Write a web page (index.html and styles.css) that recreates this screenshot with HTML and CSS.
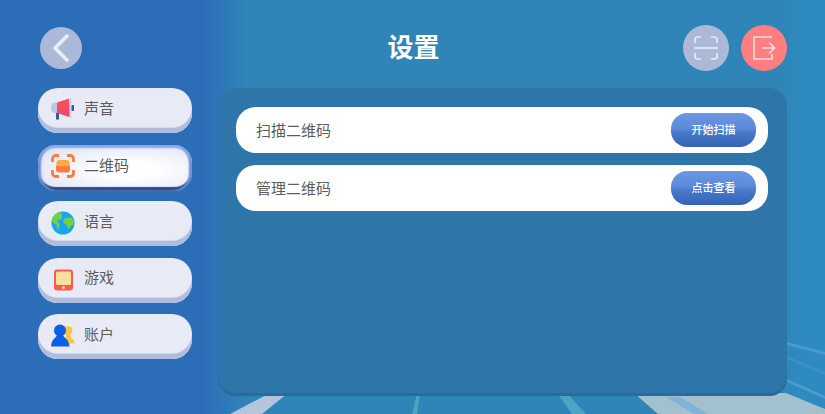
FILE: index.html
```html
<!DOCTYPE html>
<html lang="zh-CN">
<head>
  <meta charset="UTF-8" />
  <title>设置</title>
  <link rel="stylesheet" href="styles.css">
</head>
<body>
  <div class="screen">
    <!-- floor stripes behind everything -->
    <svg class="backdrop" width="825" height="414" viewBox="0 0 825 414">
      <polygon points="230,414 262,414 288,393 270,393" fill="#b4c6de"/>
      <polygon points="412,414 417,414 420,393 417,393" fill="#4ea3c4"/>
      <polygon points="572,414 586,414 567,393 557,393" fill="#4ea3c4"/>
      <polygon points="634,393 786,393 825,409 825,414 658,414" fill="#a3c0cf"/>
      <polygon points="666,397 680,397 708,414 694,414" fill="#7fb3d8"/>
      <polygon points="787,342 825,352 825,355 787,345" fill="#4a9ad2"/>
      <polygon points="787,356 825,372 825,375 787,359" fill="#3a90c8"/>
      <polygon points="787,379 825,396 825,399 787,382" fill="#4c9cd2"/>
    </svg>

    <header class="topbar">
      <div class="topbar-left">
        <button class="round-btn back-btn">
          <svg width="22" height="28" viewBox="0 0 22 28"><path d="M17 2 L5 14 L17 26" fill="none" stroke="#e8ecf6" stroke-width="3.6" stroke-linecap="round" stroke-linejoin="round"/></svg>
        </button>
      </div>
      <h1>设置</h1>
      <div class="topbar-right">
        <button class="round-btn scan-btn">
          <svg width="24" height="24" viewBox="0 0 24 24" fill="none" stroke="#e8ecf6" stroke-width="1.6">
            <path d="M1 7V3.500A2.500 2.500 0 0 1 3.500 1H7M17 1h3.500A2.500 2.500 0 0 1 23 3.500V7M23 17v3.500a2.500 2.500 0 0 1-2.500 2.500H17M7 23H3.500A2.500 2.500 0 0 1 1 20.500V17"/>
            <path d="M0 12H24"/>
          </svg>
        </button>
        <button class="round-btn exit-btn">
          <svg width="24" height="24" viewBox="0 0 24 24" fill="none" stroke="#f6dfe2" stroke-width="1.600">
            <path d="M20 1H2V23H20V18"/>
            <path d="M10 12H22M17 6.500L22.500 12L17 17.500"/>
          </svg>
        </button>
      </div>
    </header>

    <main class="content">
      <nav class="sidebar">
        <div class="side-item">
          <svg class="side-icon" width="24" height="24" viewBox="0 0 24 24">
            <rect x="5" y="14" width="3" height="7.500" fill="#35599f"/>
            <path d="M6 4.500H3.500C1 4.500 0 7 0 9.500S1 15 3.500 15H7z" fill="#b9c9e6"/>
            <polygon points="6,4.500 18,0.500 20,19.500 6,15" fill="#f4505f"/>
            <polygon points="6,10 19.300,10 20,19.500 6,15" fill="#e04a78" opacity="0.45"/>
            <rect x="18.500" y="0" width="2" height="20" fill="#ccd6ec"/>
            <rect x="20.500" y="7" width="2.500" height="6" rx="1" fill="#35599f"/>
          </svg>
          <span>声音</span>
        </div>
        <div class="side-item active">
          <svg class="side-icon" width="24" height="24" viewBox="0 0 24 24">
            <path d="M1.500 8V4.500a3 3 0 0 1 3-3H8M16 1.500h3.500a3 3 0 0 1 3 3V8M22.500 16v3.500a3 3 0 0 1-3 3H16M8 22.500H4.500a3 3 0 0 1-3-3V16" fill="none" stroke="#ff7a3c" stroke-width="2.800"/>
            <path d="M5.500 11.500V8.500A2.500 2.500 0 0 1 8 6h8a2.500 2.500 0 0 1 2.500 2.500v3z" fill="#ffaa3c"/>
            <path d="M5 11.500h14v4A3 3 0 0 1 16 18.500H8A3 3 0 0 1 5 15.500z" fill="#ff7a3c"/>
          </svg>
          <span>二维码</span>
        </div>
        <div class="side-item">
          <svg class="side-icon" width="24" height="24" viewBox="0 0 24 24">
            <circle cx="12" cy="12" r="11.500" fill="#17a4f2"/>
            <path d="M9 1C6 2 2 4 0.800 9c1 3 3 4 4.700 5 1 2 0 4 1.500 5 1-3 2-4 1-7-2-1-2-3 0-3s3-1 3-3 0-4-2-5z" fill="#6fd43f"/>
            <path d="M12 9c2-3 6-3 9-2 2 2 2 5 1 7-2 0-3 2-4 4-2-1-2-3-3-5-2 0-3-2-3-4z" fill="#6fd43f"/>
          </svg>
          <span>语言</span>
        </div>
        <div class="side-item">
          <svg class="side-icon" width="24" height="24" viewBox="0 0 24 24">
            <rect x="3" y="1.500" width="19" height="21" rx="3" fill="#fb5b52"/>
            <rect x="5" y="3.500" width="15" height="13.500" rx="1.500" fill="#ffdf9c"/>
            <circle cx="12.500" cy="19.500" r="1.500" fill="#ffdf9c"/>
          </svg>
          <span>游戏</span>
        </div>
        <div class="side-item">
          <svg class="side-icon" width="24" height="24" viewBox="0 0 24 24">
            <circle cx="17" cy="6.500" r="4.500" fill="#ffc83c"/>
            <path d="M15 10h4l1 4c2 1 3.500 2 3.500 5.500H15z" fill="#ffc83c"/>
            <circle cx="9" cy="6.500" r="6" fill="#0a5fe8"/>
            <path d="M6 11h6c1 3 6 4 6.500 11.500H0C0.500 15 5 14 6 11z" fill="#0a5fe8"/>
          </svg>
          <span>账户</span>
        </div>
      </nav>

      <section class="panel">
        <div class="row">
          <span>扫描二维码</span>
          <button class="row-btn">开始扫描</button>
        </div>
        <div class="row">
          <span>管理二维码</span>
          <button class="row-btn">点击查看</button>
        </div>
      </section>
    </main>
  </div>
</body>
</html>
```

FILE: styles.css
```css
* {
  box-sizing: border-box;
}

body {
  margin: 0;
  font-family: "Liberation Sans", "Noto Sans CJK SC", sans-serif;
}

button {
  font-family: inherit;
  border: none;
  padding: 0;
}

.screen {
  position: relative;
  width: 825px;
  height: 414px;
  overflow: hidden;
  background: linear-gradient(90deg, #2c6db8 0, #2c6db8 200px, #2f85b8 250px, #2f85b8 780px, #2f8abf 800px);
}

.backdrop {
  position: absolute;
  left: 0;
  top: 0;
}

.topbar {
  position: relative;
  display: grid;
  grid-template-columns: 1fr auto 1fr;
  align-items: center;
  height: 46px;
  margin: 25px 38px 0 40px;
}

.topbar h1 {
  margin: 0 0 6px;
  color: #fff;
  font-size: 26px;
  font-weight: 700;
}

.topbar-right {
  display: flex;
  justify-content: flex-end;
  gap: 12px;
}

.round-btn {
  display: flex;
  align-items: center;
  justify-content: center;
  width: 46px;
  height: 46px;
  border-radius: 50%;
}

.back-btn {
  width: 42px;
  height: 42px;
  background: #abb9d9;
}

.scan-btn {
  background: #abb9d6;
}

.exit-btn {
  background: #ff7f80;
}

.content {
  position: relative;
  display: flex;
  gap: 26px;
  margin: 17px 38px 0;
}

.sidebar {
  display: flex;
  flex-direction: column;
  gap: 11.5px;
  width: 154px;
}

.side-item {
  display: flex;
  align-items: center;
  gap: 9px;
  height: 45px;
  padding: 0 0 5px 13px;
  border-radius: 20px;
  background: #e8eaf5;
  box-shadow: inset 0 -5px 0 #b0bcdc, inset 0 -6px 0 #d5daea;
  color: #5c5c5c;
  font-size: 15px;
}

.side-item span {
  margin-bottom: 2px;
}

.side-icon {
  margin-top: 4px;
}

.side-item.active {
  height: 46px;
  margin-bottom: -1px;
  padding: 0 0 3px 13px;
  border-radius: 18px;
  background: radial-gradient(ellipse at 60% 55%, #fff 20%, #d6def4 100%);
  box-shadow: inset 0 3px 2px #8aa5e0, inset 3px 0 2px #6e8ccf, inset -3px 0 2px #6e8ccf, inset 0 -4px 1px #2c4a8c;
}

.side-item.active span {
  margin-bottom: 4px;
}

.side-item.active .side-icon {
  margin-top: 0;
}

.panel {
  display: flex;
  flex-direction: column;
  gap: 12px;
  width: 569px;
  height: 308px;
  padding: 19px 19px 0 18px;
  border-radius: 18px;
  background: #2e76aa;
  box-shadow: inset 0 -3px 0 #2a6a9c;
}

.row {
  display: flex;
  align-items: center;
  justify-content: space-between;
  height: 46px;
  padding: 0 12px 0 20px;
  border-radius: 20px;
  background: #fff;
  color: #5c5c5c;
  font-size: 15px;
}

.row span {
  margin-bottom: 2px;
}

.row-btn {
  width: 85px;
  height: 34px;
  padding-bottom: 2px;
  border-radius: 16px;
  background: linear-gradient(180deg, #6b97e2 0, #5c8ada 46%, #4a7aca 56%, #3363b5 100%);
  color: #fff;
  font-size: 11px;
  font-weight: 500;
}
```
